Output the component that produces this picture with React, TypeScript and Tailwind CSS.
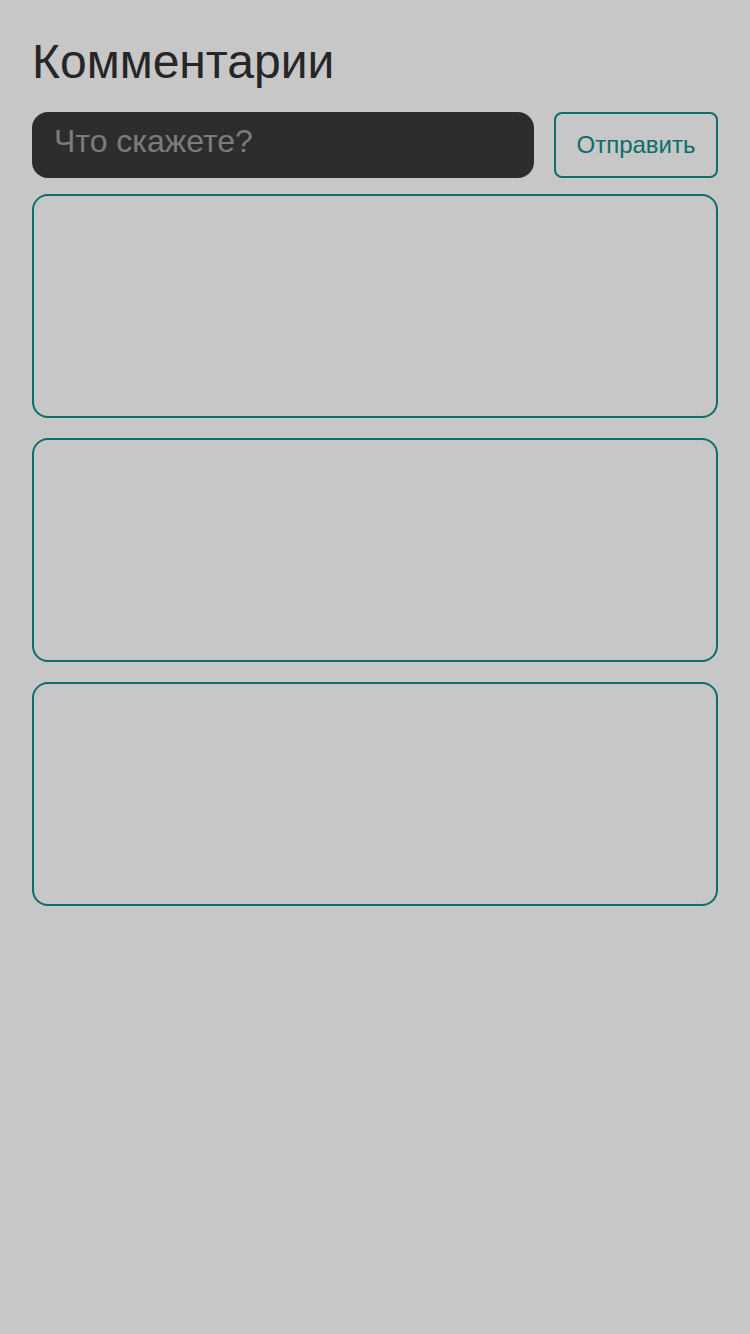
import React from "react";

export default function App() {
  return (
    <div
      className="min-h-[1334px] w-full bg-[#c7c7c7] px-8 pt-[30px]"
      style={{ fontFamily: '"Liberation Sans", Arial, sans-serif' }}
    >
      <h1 className="text-[48px] leading-[64px] text-[#262626] font-normal">Комментарии</h1>
      <div className="mt-[18px] flex gap-5">
        <div className="flex-1 h-[66px] rounded-[16px] bg-[#2d2d2d] px-[22px] pt-[5px]">
          <input
            className="w-full bg-transparent outline-none text-[32px] text-[#eee] placeholder:text-[#7c7c7c]"
            placeholder="Что скажете?"
          />
        </div>
        <button className="w-[164px] h-[66px] rounded-[8px] border-2 border-[#0b6e69] text-[24px] text-[#0b6e69]">
          Отправить
        </button>
      </div>
      <div className="mt-4 flex flex-col gap-5">
        <div className="h-[224px] rounded-[16px] border-2 border-[#0b6e69]" />
        <div className="h-[224px] rounded-[16px] border-2 border-[#0b6e69]" />
        <div className="h-[224px] rounded-[16px] border-2 border-[#0b6e69]" />
      </div>
    </div>
  );
}
